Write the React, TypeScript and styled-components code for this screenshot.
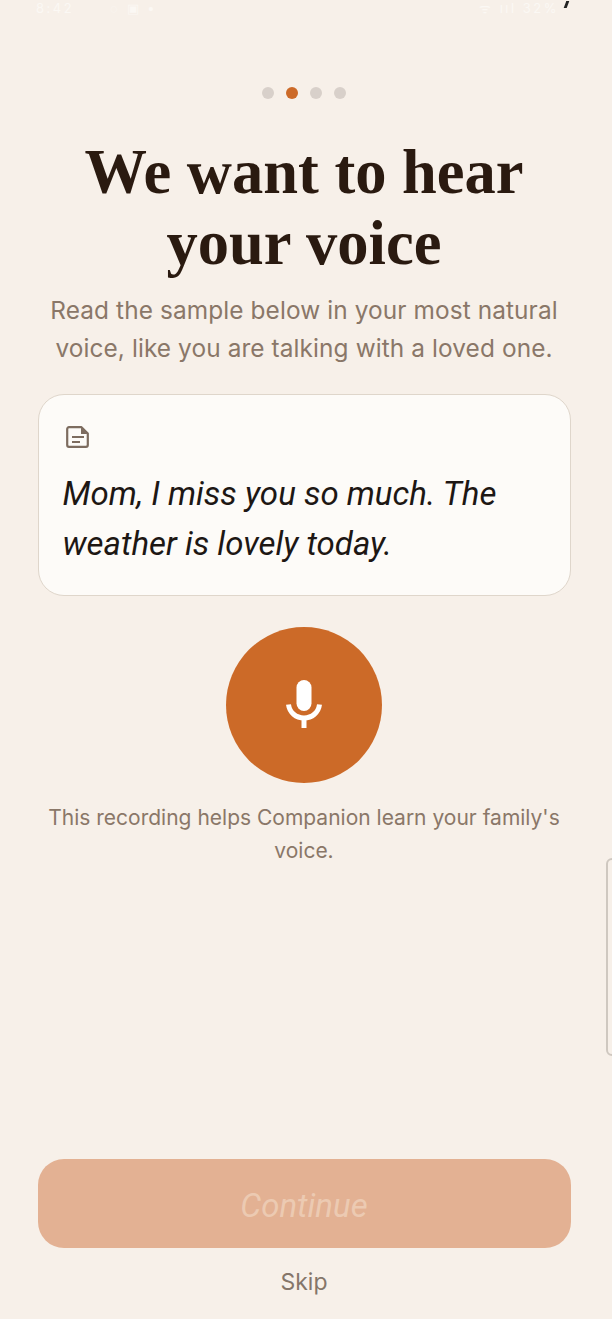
import styled, { createGlobalStyle } from "styled-components";

const GlobalStyle = createGlobalStyle`
  html, body {
    margin: 0;
    padding: 0;
    background-color: #f7f0e9;
  }
`;

const App = () => {
  return (
    <Screen>
      <GlobalStyle />
      <StatusBar>
        <StatusGroup>
          <span>8:42</span>
          <span>◌ ▣ •</span>
        </StatusGroup>
        <StatusGroup>
          <span>ᯤ ııl 32%</span>
          <StatusMark />
        </StatusGroup>
      </StatusBar>
      <Dots>
        <Dot />
        <Dot $active />
        <Dot />
        <Dot />
      </Dots>
      <Title>
        We want to hear
        <br />
        your voice
      </Title>
      <Subtitle>
        Read the sample below in your most natural
        <br />
        voice, like you are talking with a loved one.
      </Subtitle>
      <SampleCard>
        <DocIcon width="23" height="22" viewBox="0 0 23 22" fill="none">
          <path
            d="M3 1.2h12.5l6.3 6.3V19a1.8 1.8 0 0 1-1.8 1.8H3A1.8 1.8 0 0 1 1.2 19V3A1.8 1.8 0 0 1 3 1.2Z"
            stroke="#7d6c5f"
            strokeWidth="2.2"
            strokeLinejoin="round"
          />
          <path d="M15 1.5v6.5h6.5Z" fill="#7d6c5f" />
          <path d="M6 11h12M6 16h8" stroke="#7d6c5f" strokeWidth="2" />
        </DocIcon>
        <SampleText>
          Mom, I miss you so much. The weather is lovely today.
        </SampleText>
      </SampleCard>
      <MicButton>
        <svg width="36" height="48" viewBox="0 0 36 48" fill="none">
          <rect x="10.5" y="0" width="15" height="31" rx="7.5" fill="#fff" />
          <path
            d="M2.5 24.5c1 8 7.5 13.5 15.5 13.5s14.500-5.500 15.500-13.500"
            stroke="#fff"
            strokeWidth="5"
          />
          <path d="M18 37v11" stroke="#fff" strokeWidth="5" />
        </svg>
      </MicButton>
      <Hint>This recording helps Companion learn your family's voice.</Hint>
      <Spacer />
      <ContinueButton>Continue</ContinueButton>
      <SkipLink>Skip</SkipLink>
      <EdgeHandle />
    </Screen>
  );
};

export default App;

const Screen = styled.div`
  position: relative;
  width: 612px;
  height: 1319px;
  padding-right: 4px;
  box-sizing: border-box;
  overflow: hidden;

  display: flex;
  flex-direction: column;
  align-items: center;

  background-color: #f7f0e9;
  font-family: "Inter", "Liberation Sans", sans-serif;
`;

const StatusBar = styled.div`
  width: 100%;
  height: 16px;
  padding: 0 40px 0 36px;
  box-sizing: border-box;

  display: flex;
  justify-content: space-between;
  align-items: flex-start;

  color: #fbf8f4;
  font-size: 13px;
  letter-spacing: 2.500px;
  line-height: 16px;
`;

const StatusGroup = styled.div`
  display: flex;
  align-items: center;
  gap: 36px;

  &:last-child {
    gap: 6px;
  }
`;

const StatusMark = styled.div`
  width: 3px;
  height: 7px;
  margin-bottom: 8px;
  background-color: #222;
  transform: skewX(-20deg);
`;

const Dots = styled.div`
  margin-top: 71px;

  display: flex;
  gap: 12px;
`;

const Dot = styled.div<{ $active?: boolean }>`
  width: 12px;
  height: 12px;
  border-radius: 50%;
  background-color: ${({ $active }) => ($active ? "#cc6a28" : "#d8d0ca")};
`;

const Title = styled.h1`
  margin: 38px 0 0;

  color: #2a1a10;
  font-family: "Liberation Serif", serif;
  font-size: 62.500px;
  font-weight: 700;
  line-height: 71px;
  text-align: center;
`;

const Subtitle = styled.p`
  margin: 12px 0 0;

  color: #8a7768;
  font-size: 24.400px;
  line-height: 38px;
  letter-spacing: 0.1px;
  text-align: center;
`;

const SampleCard = styled.div`
  width: 533px;
  height: 202px;
  margin-top: 27px;
  padding: 31px 24px 0;
  box-sizing: border-box;

  border: 1px solid #dfd6cb;
  border-radius: 26px;
  background-color: #fdfbf8;
`;

const DocIcon = styled.svg`
  display: block;
  margin-left: 3px;
`;

const SampleText = styled.div`
  margin-top: 21px;

  color: #1d1714;
  font-family: "Roboto", sans-serif;
  font-size: 33px;
  font-style: italic;
  line-height: 50px;
`;

const MicButton = styled.div`
  width: 156px;
  height: 156px;
  margin-top: 31px;
  padding-bottom: 3px;
  box-sizing: border-box;
  border-radius: 50%;

  display: flex;
  justify-content: center;
  align-items: center;

  background-color: #cc6a28;
`;

const Hint = styled.p`
  width: 530px;
  margin: 18px 0 0;

  color: #8a7768;
  font-size: 21px;
  line-height: 33px;
  text-align: center;
`;

const Spacer = styled.div`
  flex: 1;
`;

const ContinueButton = styled.div`
  width: 533px;
  height: 89px;
  padding-top: 3px;
  box-sizing: border-box;
  border-radius: 26px;

  display: flex;
  justify-content: center;
  align-items: center;

  background-color: #e3b193;
  color: #eccab2;
  font-family: "Roboto", sans-serif;
  font-size: 33px;
  font-style: italic;
`;

const SkipLink = styled.div`
  margin-top: 20px;
  margin-bottom: 23px;

  color: #85766a;
  font-size: 23px;
  line-height: 28px;
`;

const EdgeHandle = styled.div`
  position: absolute;
  top: 858px;
  right: -6px;
  width: 8px;
  height: 194px;

  border: 2px solid #cfc8c0;
  border-radius: 6px;
`;
